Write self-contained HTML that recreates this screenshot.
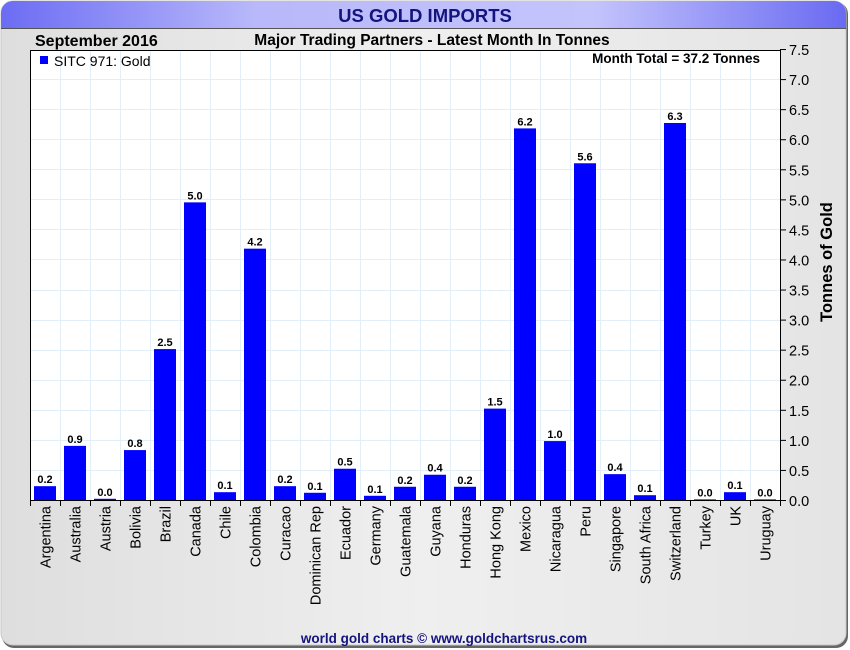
<!DOCTYPE html><html><head><style>body{margin:0;background:#fff}svg{display:block;font-family:"Liberation Sans",sans-serif}</style></head><body>
<svg width="850" height="650" xmlns="http://www.w3.org/2000/svg">
<defs>
<linearGradient id="t" x1="0" x2="1"><stop offset="0" stop-color="#6c6cf4"/><stop offset="0.3" stop-color="#b8b8fa"/><stop offset="0.7" stop-color="#c4c4fc"/><stop offset="1" stop-color="#6a6af2"/></linearGradient>
<linearGradient id="b" x1="0" x2="1"><stop offset="0" stop-color="#dedede"/><stop offset="0.5" stop-color="#efefef"/><stop offset="1" stop-color="#e4e4e4"/></linearGradient>
</defs>
<rect x="0" y="0" width="850" height="650" fill="#fff"/>
<rect x="2" y="2" width="846" height="646" rx="12" fill="#666"/>
<rect x="1" y="1" width="845" height="644" rx="12" fill="url(#b)" stroke="#c8c8c8"/>
<path d="M1 28 V13 A12 12 0 0 1 13 1 H834 A12 12 0 0 1 846 13 V28 Z" fill="url(#t)"/>
<line x1="1" y1="28.5" x2="846" y2="28.5" stroke="#555"/>
<text x="425" y="22" text-anchor="middle" font-size="18.5" font-weight="bold" fill="#141480">US GOLD IMPORTS</text>
<text x="35" y="46" font-size="16" font-weight="bold" fill="#000">September 2016</text>
<text x="432" y="45" text-anchor="middle" font-size="15.5" font-weight="bold" fill="#000">Major Trading Partners - Latest Month In Tonnes</text>
<rect x="30.5" y="50.5" width="750" height="450" fill="#fff" stroke="#000"/>
<g id="grid" stroke="#e2eef8" stroke-width="1"></g>
<g id="bars"></g>
<rect x="40" y="56" width="8" height="8" fill="#0000ff"/>
<text x="54" y="66" font-size="14" fill="#000">SITC 971: Gold</text>
<text x="760" y="63" text-anchor="end" font-size="13.5" font-weight="bold" fill="#000">Month Total = 37.2 Tonnes</text>
<text transform="translate(832,262) rotate(-90)" text-anchor="middle" font-size="16.5" font-weight="bold">Tonnes of Gold</text>
<text x="444" y="643" text-anchor="middle" font-size="13.5" font-weight="bold" fill="#141480">world gold charts © www.goldchartsrus.com</text>
</svg>
<script>
var ns="http://www.w3.org/2000/svg",s=document.querySelector('svg'),g=document.getElementById('grid'),bg=document.getElementById('bars');
function el(t,a,p,txt){var e=document.createElementNS(ns,t);for(var k in a)e.setAttribute(k,a[k]);if(txt!=null)e.textContent=txt;(p||s).appendChild(e);return e;}
for(var i=1;i<25;i++)el('line',{x1:30.5+i*30,x2:30.5+i*30,y1:51,y2:500},g);
for(var v=0.5;v<7.5;v+=0.5){var y=Math.round(500-v*60.13)+.5;el('line',{x1:31,x2:780,y1:y,y2:y},g);}
for(var v=0;v<=7.5;v+=0.5){var y=500.5-v*60.13;el('line',{x1:780,x2:786,y1:y,y2:y,stroke:'#000'});el('text',{x:789,y:y+5.5,'font-size':14.5,fill:'#000'},null,v.toFixed(1));}
var d=[["Argentina",.23,"0.2"],["Australia",.9,"0.9"],["Austria",.02,"0.0"],["Bolivia",.83,"0.8"],["Brazil",2.51,"2.5"],["Canada",4.95,"5.0"],["Chile",.13,"0.1"],["Colombia",4.18,"4.2"],["Curacao",.23,"0.2"],["Dominican Rep",.12,"0.1"],["Ecuador",.52,"0.5"],["Germany",.07,"0.1"],["Guatemala",.22,"0.2"],["Guyana",.42,"0.4"],["Honduras",.22,"0.2"],["Hong Kong",1.52,"1.5"],["Mexico",6.18,"6.2"],["Nicaragua",.98,"1.0"],["Peru",5.6,"5.6"],["Singapore",.43,"0.4"],["South Africa",.08,"0.1"],["Switzerland",6.27,"6.3"],["Turkey",.01,"0.0"],["UK",.13,"0.1"],["Uruguay",.01,"0.0"]];
d.forEach(function(r,i){var x=30+i*30,h=r[1]*60.13,cx=x+15;
el('rect',{x:x+4,y:500-h,width:22,height:h,fill:'#0000ff'},bg);
el('text',{x:cx,y:500-h-3,'text-anchor':'middle','font-size':11,'font-weight':'bold',fill:'#000'},bg,r[2]);
el('line',{x1:x+.5,x2:x+.5,y1:500,y2:506,stroke:'#000'});
el('text',{transform:'translate('+(cx+5.5)+',506) rotate(-90)','text-anchor':'end','font-size':14.5,fill:'#000'},null,r[0]);});
el('line',{x1:780.5,x2:780.5,y1:500,y2:506,stroke:'#000'});
</script>
</body></html>
